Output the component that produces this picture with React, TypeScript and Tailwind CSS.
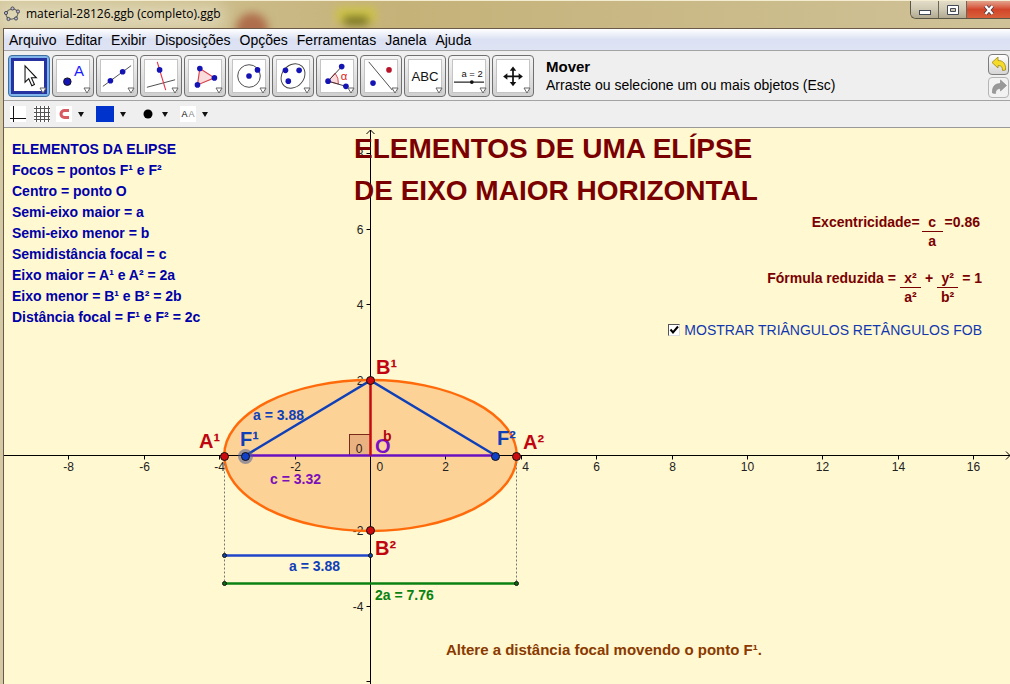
import { useState } from "react";
import type { ReactNode } from "react";
import clsx from "clsx";

const menus = ["Arquivo", "Editar", "Exibir", "Disposições", "Opções", "Ferramentas", "Janela", "Ajuda"];

const notes = [
  "ELEMENTOS DA ELIPSE",
  "Focos = pontos F¹ e F²",
  "Centro = ponto O",
  "Semi-eixo maior = a",
  "Semi-eixo menor = b",
  "Semidistância focal = c",
  "Eixo maior = A¹ e A² = 2a",
  "Eixo menor = B¹ e B² = 2b",
  "Distância focal = F¹ e F² = 2c",
];

const Dot = ({ x, y, r = 3, fill = "#1414b4" }: { x: number; y: number; r?: number; fill?: string }) => (
  <circle cx={x} cy={y} r={r} fill={fill} />
);

const tools: { name: string; icon: ReactNode }[] = [
  {
    name: "Mover",
    icon: <path d="M12.500 5.500v18.500l4.200-3.900 3.500 7.900 3-1.400-3.500-7.600h5.700z" fill="#fff" stroke="#111" strokeWidth="1.2" />,
  },
  {
    name: "Novo ponto",
    icon: (
      <>
        <circle cx="11" cy="23" r="4" fill="#1414b4" stroke="#111" />
        <text x="18" y="17" fontSize="16" fill="#1a1aff">A</text>
      </>
    ),
  },
  {
    name: "Reta",
    icon: (
      <>
        <path d="M2 28L32 6" stroke="#444" />
        <Dot x={10} y={22} />
        <Dot x={23} y={12.5} />
      </>
    ),
  },
  {
    name: "Reta perpendicular",
    icon: (
      <>
        <path d="M2 29L32 21" stroke="#444" />
        <path d="M13 2L22 32" stroke="#e8334a" strokeWidth="1.2" />
        <Dot x={15.5} y={10.5} />
      </>
    ),
  },
  {
    name: "Polígono",
    icon: (
      <>
        <path d="M11.500 9L27 19L9 26.500Z" fill="#fadcdc" stroke="#d8404a" strokeWidth="1.2" />
        <Dot x={11.5} y={9} />
        <Dot x={27} y={19} />
        <Dot x={9} y={26.5} />
      </>
    ),
  },
  {
    name: "Círculo",
    icon: (
      <>
        <circle cx="17" cy="17" r="12" fill="none" stroke="#444" />
        <Dot x={17} y={17} />
        <Dot x={26} y={10.5} />
      </>
    ),
  },
  {
    name: "Elipse",
    icon: (
      <>
        <ellipse cx="17" cy="17" rx="14" ry="11.500" transform="rotate(-48 17 17)" fill="none" stroke="#444" />
        <Dot x={9} y={11} />
        <Dot x={23.5} y={11} />
        <Dot x={12} y={22.5} />
      </>
    ),
  },
  {
    name: "Ângulo",
    icon: (
      <>
        <path d="M7.500 22.500L15 14Q19 19 18.500 25.500Z" fill="#fadcdc" stroke="#d8404a" />
        <path d="M22 7L7.500 22.500L26.500 28" fill="none" stroke="#333" />
        <text x="21" y="21" fontSize="12" fill="#e02020">α</text>
        <Dot x={22} y={7} />
        <Dot x={7.5} y={22.5} />
        <Dot x={26.5} y={28} />
      </>
    ),
  },
  {
    name: "Reflexão",
    icon: (
      <>
        <path d="M4 2L29 32" stroke="#444" />
        <Dot x={8.5} y={24.5} />
        <Dot x={25.5} y={10.5} fill="#b8142a" />
      </>
    ),
  },
  {
    name: "Texto",
    icon: <text x="17" y="22" fontSize="14" textAnchor="middle" fill="#111">ABC</text>,
  },
  {
    name: "Controle deslizante",
    icon: (
      <>
        <path d="M1 23.500H33" stroke="#111" strokeWidth="1.200" />
        <Dot x={20} y={23.5} r={2} fill="#111" />
        <text x="9" y="18" fontSize="10" fill="#111">a = 2</text>
      </>
    ),
  },
  {
    name: "Deslocar eixos",
    icon: (
      <>
        <path d="M17 10V25M10 17.500H24" stroke="#111" strokeWidth="1.800" />
        <path d="M17 7l-3.500 4.500h7zM17 28l-3.500-4.500h7zM6.500 17.500l4.500-3.500v7zM27.500 17.500l-4.500-3.500v7z" fill="#111" />
      </>
    ),
  },
];

function Caret() {
  return (
    <svg viewBox="0 0 6 5" className="h-[5px] w-1.5">
      <path d="M0 0h6L3 5z" fill="#111" />
    </svg>
  );
}

function TitleBar() {
  return (
    <header className="relative flex h-7 items-start justify-between overflow-hidden border-t border-[#f3ecd0] bg-linear-to-r from-[#d3c79c] via-[#c5b279] via-40% to-[#cfc298]">
      <div className="pointer-events-none absolute top-1 left-0 h-6 w-56 bg-[#e6dfc4]/70 blur-sm" />
      <div className="pointer-events-none absolute top-3 left-59 h-8 w-8 rounded-full bg-[#a85a3c]/80 blur-xs" />
      <div className="pointer-events-none absolute top-1.5 left-84 h-4 w-10 bg-[#cdc34a] blur-xs" />
      <div className="pointer-events-none absolute top-4 left-86 h-2 w-6 bg-[#6f6a1e] blur-xs" />
      <div className="relative flex items-center gap-1.5 py-1 pl-1">
        <svg viewBox="0 0 16 16" className="size-4">
          <ellipse cx="8" cy="8" rx="6" ry="5" fill="none" stroke="#666" strokeWidth="1.1" transform="rotate(-15 8 8)" />
          {[[8.5, 2.5], [14, 5.5], [12, 12.5], [4.5, 13], [2, 7]].map(([x, y]) => (
            <circle key={x} cx={x} cy={y} r="1.600" fill="#b9b6d8" stroke="#333" strokeWidth="0.8" />
          ))}
        </svg>
        <h1 className="font-['Open_Sans',sans-serif] text-xs leading-[18px] text-black">
          material-28126.ggb (completo).ggb
        </h1>
      </div>
      <div className="relative flex h-[18px] overflow-hidden rounded-bl-md border-b border-l border-[#5b5747]">
        <button aria-label="Minimizar" className="flex w-7 items-center justify-center border-r border-[#6b6758] bg-linear-to-b from-[#e3dcc8] via-[#cfc8b2] via-50% to-[#b1a98f]">
          <svg viewBox="0 0 12 12" className="size-3">
            <rect x="0.5" y="6.5" width="11" height="4" fill="#fff" stroke="#444a55" />
          </svg>
        </button>
        <button aria-label="Maximizar" className="flex w-7 items-center justify-center border-r border-[#6b6758] bg-linear-to-b from-[#e3dcc8] via-[#cfc8b2] via-50% to-[#b1a98f]">
          <svg viewBox="0 0 12 12" className="size-3">
            <path d="M0.500 1.500h11v9h-11zM3.500 4.500h5v3h-5z" fill="#fff" fillRule="evenodd" stroke="#444a55" />
          </svg>
        </button>
        <button aria-label="Fechar" className="flex w-[43px] items-center justify-center bg-linear-to-b from-[#e2a18c] via-[#d2452a] via-50% to-[#d8603a]">
          <svg viewBox="0 0 12 12" className="size-3">
            <path d="M2.500 2l7 8M9.500 2l-7 8" stroke="#4b3a40" strokeWidth="4" />
            <path d="M2.500 2l7 8M9.500 2l-7 8" stroke="#fff" strokeWidth="2.400" />
          </svg>
        </button>
      </div>
    </header>
  );
}

function ToolBar() {
  const [active, setActive] = useState("Mover");
  return (
    <div className="flex h-[51px] items-center border-y border-[#a3a3a3] bg-[#efefef] pr-px pl-1">
      <div className="flex gap-0.5">
        {tools.map((tool) => (
          <button
            key={tool.name}
            aria-label={tool.name}
            onClick={() => setActive(tool.name)}
            className={clsx(
              "relative flex size-[42px] items-center justify-center rounded border",
              active === tool.name
                ? "border-[#3f6f9f] bg-[#7fb4ea]"
                : "border-[#707070] bg-linear-to-b from-[#f4f4f4] to-[#cfcfcf]",
            )}
          >
            <svg
              viewBox="0 0 34 34"
              className={clsx(
                "bg-white font-['Liberation_Sans',sans-serif]",
                active === tool.name ? "size-9 border-3 border-[#2632a0]" : "size-[34px] border border-[#c4c4c4]",
              )}
            >
              {tool.icon}
            </svg>
            <svg viewBox="0 0 8 7" className="absolute right-0.5 bottom-0.5 h-[7px] w-2">
              <path d="M1 1h6L4 6z" fill="#fff" stroke="#666" />
            </svg>
          </button>
        ))}
      </div>
      <div className="ml-3 flex-1 text-black">
        <p className="text-[15px] leading-[19px] font-bold">Mover</p>
        <p className="text-sm leading-[19px]">Arraste ou selecione um ou mais objetos (Esc)</p>
      </div>
      <div className="flex flex-col gap-0.5">
        <button aria-label="Desfazer" className="flex size-[21px] items-center justify-center rounded-sm border border-[#7d7d7d] bg-linear-to-b from-white to-[#d5d5d5]">
          <svg viewBox="0 0 16 16" className="size-4">
            <path d="M1 6.500L7 1v3.500c5 0 8 3 7.500 9.500l-3 .5c0-3.500-1-5-4.500-5V12z" fill="#f5dc2a" stroke="#a8901c" strokeWidth="0.900" />
          </svg>
        </button>
        <button aria-label="Refazer" className="flex size-[21px] items-center justify-center rounded-sm border border-[#b5b5b5] bg-[#f2f2f2]">
          <svg viewBox="0 0 16 16" className="size-4">
            <path d="M15.500 6.500L9.500 1v3.500C4 4.500 1 7.500 1.500 14l3 .5c0-3.500 1.500-5 5-5V12z" fill="#999" stroke="#848484" strokeWidth="0.600" />
          </svg>
        </button>
      </div>
    </div>
  );
}

function StyleBar() {
  return (
    <div className="flex h-[27px] items-center border-b border-[#999] bg-[#efefef] pl-1.5">
      <button aria-label="Eixos" className="mr-2">
        <svg viewBox="0 0 16 16" className="size-4 bg-white">
          <path d="M3.500 0v16M0 12.500h16" stroke="#111" />
        </svg>
      </button>
      <button aria-label="Malha" className="mr-1.5">
        <svg viewBox="0 0 16 16" className="size-4 bg-white">
          <path d="M2.500 0v16M6.500 0v16M10.500 0v16M14.500 0v16M0 2.500h16M0 6.500h16M0 10.500h16M0 13.500h16" stroke="#555" />
        </svg>
      </button>
      <button aria-label="Captura de ponto" className="mr-3 flex items-center gap-1.5">
        <svg viewBox="0 0 16 16" className="size-4 bg-white">
          <path d="M13 4.500H8.500a3.500 3.500 0 0 0 0 7H13" fill="none" stroke="#d85a62" strokeWidth="3" />
        </svg>
        <Caret />
      </button>
      <button aria-label="Cor" className="mr-3.5 flex items-center gap-1.5">
        <span className="h-4 w-[18px] bg-[#0033cc]" />
        <Caret />
      </button>
      <button aria-label="Estilo do ponto" className="mr-3 flex items-center gap-1.5">
        <svg viewBox="0 0 16 16" className="size-4">
          <circle cx="8" cy="8" r="4.500" fill="#000" />
        </svg>
        <Caret />
      </button>
      <button aria-label="Tamanho do texto" className="flex items-center gap-1.5">
        <span className="flex h-4 w-4 items-center justify-center gap-px bg-white text-[9px] leading-4">
          A<span className="text-[#888]">A</span>
        </span>
        <Caret />
      </button>
    </div>
  );
}

// Graphics view: origin and scale in pixels
const OX = 366;
const OY = 328;
const UNIT = 37.7;
const px = (x: number) => Math.round(OX + x * UNIT) + 0.5;
const py = (y: number) => Math.round(OY - y * UNIT) - 0.5;

const a = 3.88;
const b = 2;
const c = 3.32;

const xTicks = [-8, -6, -4, -2, 2, 4, 6, 8, 10, 12, 14, 16];
const yTicks = [8, 6, 4, 2, -2, -4, -6];

function Graph() {
  return (
    <svg className="absolute inset-0 h-full w-full">
      <ellipse cx={px(0)} cy={py(0)} rx={a * UNIT} ry={b * UNIT} fill="#fdd297" />
      <g stroke="#000">
        <path d={`M${px(0)} 2V2000M0 ${py(0)}H4000`} />
        <path d={`M${px(0) - 4} 6l4 -4l4 4`} fill="none" />
        {xTicks.map((t) => (
          <path key={t} d={`M${px(t)} ${py(0)}v4`} />
        ))}
        {yTicks.map((t) => (
          <path key={t} d={`M${px(0)} ${py(t)}h-4`} />
        ))}
      </g>
      <svg x="100%" y={py(0)} overflow="visible">
        <path d="M-4 -4L0 0L-4 4" fill="none" stroke="#000" />
      </svg>
      <g className="text-xs" fill="#222">
        {xTicks.map((t) => (
          <text key={t} x={px(t) + (t === 4 ? 4 : 0)} y={OY + 15} textAnchor="middle">
            {t}
          </text>
        ))}
        <text x={px(0) + 6} y={OY + 15}>0</text>
        <text x={px(0) - 8} y={OY - 3} textAnchor="end">0</text>
        {yTicks.slice(0, -1).map((t) => (
          <text key={t} x={px(0) - 7} y={py(t) + 4} textAnchor="end">
            {t}
          </text>
        ))}
      </g>

      <ellipse cx={px(0)} cy={py(0)} rx={a * UNIT} ry={b * UNIT} fill="none" stroke="#ff6a0a" strokeWidth="2.500" />
      <rect x={px(0) - 21} y={py(0) - 21} width="21" height="21" fill="#7a0000" fillOpacity="0.15" stroke="#7a2a1a" />
      <path d={`M${px(-a)} ${py(0)}V${py(-3.4)}M${px(a)} ${py(0)}V${py(-3.4)}`} stroke="#777" strokeDasharray="2 2" />

      <g fill="none" strokeWidth="2.500">
        <path d={`M${px(-c)} ${py(0)}L${px(0)} ${py(b)}L${px(c)} ${py(0)}`} stroke="#1040b8" />
        <path d={`M${px(-c)} ${py(0)}H${px(c)}`} stroke="#6a10c0" />
        <path d={`M${px(0)} ${py(0)}V${py(b)}`} stroke="#c40a10" />
        <path d={`M${px(-a)} ${py(-2.65)}H${px(0)}`} stroke="#1f46c8" />
        <path d={`M${px(-a)} ${py(-3.4)}H${px(a)}`} stroke="#0a8212" />
      </g>

      <circle cx={px(-c)} cy={py(0) + 1} r="7.500" fill="#4a5f96" fillOpacity="0.550" />
      <g stroke="#111">
        <circle cx={px(-a)} cy={py(0) + 1} r="4" fill="#cc0a10" />
        <circle cx={px(a)} cy={py(0) + 1} r="4" fill="#cc0a10" />
        <circle cx={px(0)} cy={py(b)} r="4" fill="#cc0a10" />
        <circle cx={px(0)} cy={py(-b)} r="4" fill="#cc0a10" />
        <circle cx={px(-c)} cy={py(0) + 1} r="4" fill="#1040c8" />
        <circle cx={px(c)} cy={py(0) + 1} r="4" fill="#1040c8" />
        <circle cx={px(-a)} cy={py(-2.65)} r="2" fill="#1040a0" />
        <circle cx={px(0)} cy={py(-2.65)} r="2" fill="#1040a0" />
        <circle cx={px(-a)} cy={py(-3.4)} r="2" fill="#0a6a12" />
        <circle cx={px(a)} cy={py(-3.4)} r="2" fill="#0a6a12" />
      </g>

      <g className="text-xl font-bold" fill="#c00510">
        <text x="195" y="320">A¹</text>
        <text x="519" y="321">A²</text>
        <text x="372" y="246">B¹</text>
        <text x="371" y="427">B²</text>
        <text x="236" y="318" fill="#1040b8">F¹</text>
        <text x="493" y="317" fill="#1040b8">F²</text>
        <text x="371" y="325" fill="#7a10c8">O</text>
      </g>
      <g className="text-sm font-bold">
        <text x="379" y="313" fill="#b00510">b</text>
        <text x="249" y="292" fill="#1040b8">a = 3.88</text>
        <text x="266" y="356" fill="#7a10b8">c = 3.32</text>
        <text x="285" y="443" fill="#1040b8">a = 3.88</text>
        <text x="371" y="472" fill="#0a8212">2a = 7.76</text>
      </g>
    </svg>
  );
}

function Fraction({ top, bottom }: { top: string; bottom: string }) {
  return (
    <span className="inline-flex w-[21px] flex-col items-center">
      <span className="w-full border-b border-[#7a0000] text-center">{top}</span>
      <span>{bottom}</span>
    </span>
  );
}

export default function App() {
  const [showTriangles, setShowTriangles] = useState(true);

  return (
    <div className="flex min-h-screen flex-col bg-[#d3c9a4] font-['Liberation_Sans',Arial,sans-serif]">
      <TitleBar />
      <div className="ml-[3px] flex flex-1 flex-col border-t border-l border-[#6b5a4a]">
        <nav className="flex h-[21px] items-center gap-[9px] bg-linear-to-b from-white via-[#dbe1f3] via-50% to-[#dfe4f4] pl-[5px] text-sm text-black">
          {menus.map((menu) => (
            <button key={menu}>{menu}</button>
          ))}
        </nav>
        <ToolBar />
        <StyleBar />

        <main className="relative flex-1 overflow-hidden bg-[#fff8d0]">
          <Graph />

          <div className="relative py-[11px] pl-2 text-sm leading-[21px] font-bold text-[#0000a8]">
            {notes.map((note) => (
              <p key={note}>{note}</p>
            ))}
          </div>

          <h2 className="absolute top-0 left-[350px] text-[28px] leading-[42px] font-bold whitespace-nowrap text-[#7a0000]">
            ELEMENTOS DE UMA ELÍPSE
            <br />
            DE EIXO MAIOR HORIZONTAL
          </h2>

          {/* Formulas */}
          <div className="absolute top-[85px] left-[668px] flex w-[310px] flex-col items-end text-sm leading-[18px] font-bold text-[#7a0000]">
            <p className="flex items-baseline gap-0.5 pr-0.5">
              Excentricidade=
              <Fraction top="c" bottom="a" />
              =0.86
            </p>
            <p className="mt-[19px] flex items-baseline gap-1">
              Fórmula reduzida =
              <Fraction top="x²" bottom="a²" />
              +
              <Fraction top="y²" bottom="b²" />
              = 1
            </p>
            <label className="mt-[15px] flex items-center gap-1 font-normal whitespace-nowrap text-[#1238b0]">
              <input
                type="checkbox"
                checked={showTriangles}
                onChange={(e) => setShowTriangles(e.target.checked)}
                className="peer size-3 appearance-none border border-[#555] border-r-[#ddd] border-b-[#ddd] bg-white"
              />
              <svg viewBox="0 0 12 12" className="pointer-events-none invisible -ml-4 size-3 peer-checked:visible">
                <path d="M2.500 5.500l2.500 3l5 -6" fill="none" stroke="#000" strokeWidth="2" />
              </svg>
              MOSTRAR TRIÂNGULOS RETÂNGULOS FOB
            </label>
          </div>

          <p className="absolute top-[513px] left-[442px] text-[15px] leading-[18px] font-bold whitespace-nowrap text-[#8a3a00]">
            Altere a distância focal movendo o ponto F¹.
          </p>
        </main>
      </div>
    </div>
  );
}
